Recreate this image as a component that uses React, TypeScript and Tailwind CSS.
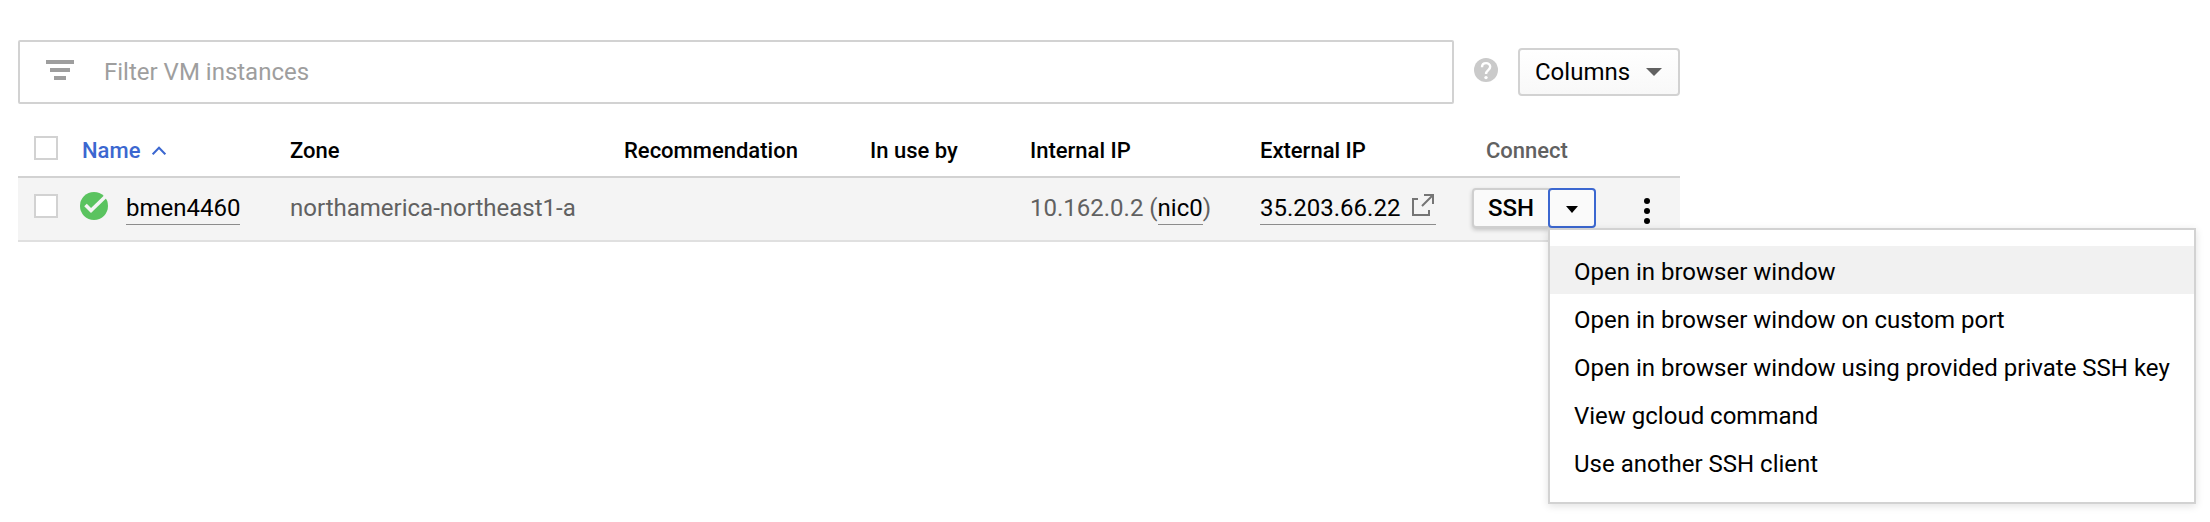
import type { ReactNode } from "react";

const menuItems = [
  "Open in browser window",
  "Open in browser window on custom port",
  "Open in browser window using provided private SSH key",
  "View gcloud command",
  "Use another SSH client",
];

const columns =
  "grid grid-cols-[64px_208px_334px_246px_160px_230px_226px_194px] items-start";

function Checkbox() {
  return <span className="block size-6 shrink-0 border-2 border-[#d2d2d2] bg-white" />;
}

function Link({ children }: { children: ReactNode }) {
  return (
    <a className="inline-block h-[31px] border-b border-[#8c8c8c] leading-[28px] text-black">
      {children}
    </a>
  );
}

function Toolbar() {
  return (
    <div className="flex items-start">
      <div className="flex h-16 w-[1436px] items-center rounded-[2px] border-2 border-[#d2d2d2] pl-[26px]">
        <svg className="mb-1 h-5 w-7" viewBox="0 0 28 20" fill="#9e9e9e">
          <path d="M0 0h28v4H0zM4 8h20v4H4zM8 16h12v4H8z" />
        </svg>
        <span className="ml-[30px] text-2xl leading-7 text-[#9e9e9e]">Filter VM instances</span>
      </div>
      <svg className="mt-[18px] ml-5 size-6" viewBox="0 0 24 24">
        <circle cx="12" cy="12" r="12" fill="#cacaca" />
        <path
          d="M8 9.2C8 3.8 16.2 4 16.2 8.8c0 3.2-4.2 3.4-4.2 7.2"
          fill="none"
          stroke="#fff"
          strokeWidth="2.4"
        />
        <circle cx="12" cy="19.6" r="1.7" fill="#fff" />
      </svg>
      <button className="mt-2 ml-5 flex h-12 w-[162px] items-center rounded-[4px] border-2 border-[#d2d2d2] bg-linear-to-b from-white to-[#f8f8f8] pl-[15px] text-2xl leading-7">
        Columns
        <svg className="mr-4 ml-auto h-2 w-4" viewBox="0 0 16 8" fill="#616161">
          <path d="M0 0h16L8 8z" />
        </svg>
      </button>
    </div>
  );
}

function HeaderRow() {
  return (
    <div
      className={`${columns} h-[74px] border-b-2 border-[#d2d2d2] pt-[34px] text-[22px] leading-[26px] font-medium`}
    >
      <div className="-mt-[2px] pl-4">
        <Checkbox />
      </div>
      <div className="flex items-center text-[#3b67d0]">
        Name
        <svg className="mb-px ml-3 h-[9px] w-[14px]" viewBox="0 0 14 9" fill="none">
          <path d="M.7 8.3L7 1.7l6.300 6.600" stroke="#3b67d0" strokeWidth="2" />
        </svg>
      </div>
      <div>Zone</div>
      <div>Recommendation</div>
      <div>In use by</div>
      <div>Internal IP</div>
      <div>External IP</div>
      <div className="text-[#616161]">Connect</div>
    </div>
  );
}

function SshMenu() {
  return (
    <ul className="absolute top-10 left-[76px] z-10 h-[276px] w-[648px] border-2 border-[#d2d2d2] bg-white py-4 shadow-[0_2px_8px_rgba(0,0,0,0.12)]">
      {menuItems.map((item, i) => (
        <li
          key={item}
          className={`flex h-12 items-center pt-[3px] pl-6 text-2xl leading-7 whitespace-nowrap ${
            i === 0 ? "bg-[#f1f1f1]" : ""
          }`}
        >
          {item}
        </li>
      ))}
    </ul>
  );
}

function InstanceRow() {
  return (
    <div
      className={`${columns} h-16 border-b-2 border-[#e0e0e0] bg-[#f4f4f4] text-2xl leading-7 text-[#616161]`}
    >
      <div className="pt-4 pl-4">
        <Checkbox />
      </div>
      <div className="flex items-start pt-[14px]">
        <svg className="-ml-[2px] size-7" viewBox="0 0 28 28">
          <circle cx="14" cy="14" r="14" fill="#5ac35f" />
          <path d="M5.500 13l5.500 5.500L25.500 4.500" fill="none" stroke="#f4f4f4" strokeWidth="3.600" />
        </svg>
        <span className="mt-[2px] ml-[18px]">
          <Link>bmen4460</Link>
        </span>
      </div>
      <div className="pt-4">northamerica-northeast1-a</div>
      <div />
      <div />
      <div className="pt-4">
        10.162.0.2 (<Link>nic0</Link>)
      </div>
      <div className="pt-4">
        <Link>
          <span className="flex w-44 items-start">
            35.203.66.22
            <svg
              className="mr-[2px] ml-auto size-[22px]"
              viewBox="0 0 22 22"
              fill="none"
              stroke="#757575"
              strokeWidth="2"
            >
              <path d="M6 5H1v16h16v-5M12 1h9v9M21 1L10 12" />
            </svg>
          </span>
        </Link>
      </div>
      <div className="relative -ml-[14px] flex pt-[10px]">
        <div className="relative flex h-10">
          <button className="h-10 w-[78px] rounded-l-[4px] border-2 border-[#cfcfcf] bg-[#fafafa] pl-[14px] text-left text-2xl leading-7 font-medium text-black shadow-[0_2px_4px_rgba(0,0,0,0.2)]">
            SSH
          </button>
          <button className="relative -ml-[2px] flex h-10 w-12 items-center justify-center rounded-[4px] border-2 border-[#3b67d0] bg-[#fafafa]">
            <svg className="mt-[3px] h-[7px] w-3" viewBox="0 0 12 7">
              <path d="M0 0h12L6 7z" />
            </svg>
          </button>
          <div className="text-black">
            <SshMenu />
          </div>
        </div>
        <svg className="mt-[10px] ml-12 h-[26px] w-[6px]" viewBox="0 0 6 26">
          <circle cx="3" cy="3" r="3" />
          <circle cx="3" cy="13" r="3" />
          <circle cx="3" cy="23" r="3" />
        </svg>
      </div>
    </div>
  );
}

export default function App() {
  return (
    <main className="h-[522px] w-[2210px] overflow-hidden bg-white pt-10 pl-[18px] font-[Roboto,sans-serif] text-black">
      <Toolbar />
      <div className="w-[1662px]">
        <HeaderRow />
        <InstanceRow />
      </div>
    </main>
  );
}
